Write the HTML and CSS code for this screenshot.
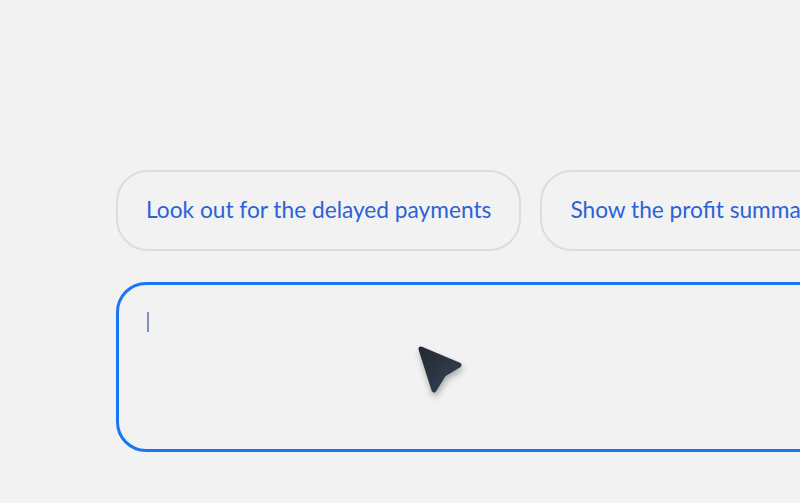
FILE: index.html
```html
<!DOCTYPE html>
<html lang="en">
<head>
    <meta charset="UTF-8">
    <meta name="viewport" content="width=device-width, initial-scale=1.0">
    <title>Assistant prompt</title>
    <link rel="stylesheet" href="styles.css">
</head>
<body>
    <div class="stage">
        <div class="chips">
            <button class="chip">Look out for the delayed payments</button>
            <button class="chip">Show the profit summary</button>
        </div>
        <div class="prompt">
            <span class="caret"></span>
            <svg class="pointer" width="60" height="64" viewBox="0 0 60 64">
                <defs>
                    <linearGradient id="pg" x1="0" y1="0" x2="1" y2="1">
                        <stop offset="0" stop-color="#222a35"/>
                        <stop offset="1" stop-color="#364352"/>
                    </linearGradient>
                </defs>
                <path d="M9 11 L47 27 L32 36 L22 52 Z" fill="url(#pg)" stroke="url(#pg)" stroke-width="5" stroke-linejoin="round"/>
            </svg>
        </div>
    </div>
</body>
</html>
```

FILE: styles.css
```css
body {
    margin: 0;
    background-color: #f2f2f2;
    font-family: Lato, "Open Sans", sans-serif;
    overflow: hidden;
}
.stage {
    padding: 170px 0 0 116px;
    width: 1200px;
}
.chips {
    display: flex;
    gap: 19px;
}
.chip {
    height: 81px;
    padding: 0 28px 3px;
    border: 2px solid #dcdcdc;
    border-radius: 32px;
    background-color: #f2f2f2;
    color: #2b63d6;
    font-family: inherit;
    font-size: 22.7px;
    white-space: nowrap;
}
.prompt {
    position: relative;
    margin-top: 31px;
    width: 900px;
    height: 170px;
    border: 3px solid #1877f2;
    border-radius: 30px;
    box-sizing: border-box;
}
.caret {
    position: absolute;
    left: 28px;
    top: 27px;
    width: 2px;
    height: 20px;
    background-color: #7f93bd;
}
.pointer {
    position: absolute;
    left: 293px;
    top: 53px;
    filter: drop-shadow(1px 4px 3px rgba(0, 0, 0, 0.3));
}
```
